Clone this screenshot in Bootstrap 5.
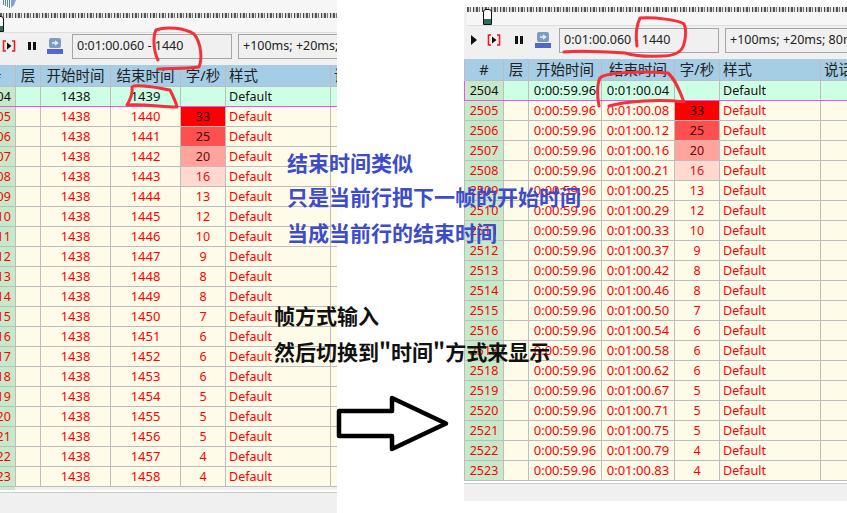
<!DOCTYPE html>
<html lang="zh">
<head>
<meta charset="utf-8">
<title>字幕</title>
<link href="https://cdn.jsdelivr.net/npm/bootstrap@5.3.0/dist/css/bootstrap.min.css" rel="stylesheet">
<style>
html,body{margin:0;background:#fff;overflow:hidden}
.stage{position:relative;width:847px;height:513px;overflow:hidden;font-family:"Noto Sans","Noto Sans CJK SC",sans-serif}
.win{position:absolute;background:#f0f0f0;overflow:hidden}
.win-a{left:0;top:0;width:337px;height:513px}
.win-b{left:464px;top:7px;width:383px;height:494px}
.wave-top{height:13px;background:#f6f6f6;padding-left:3px}
.win-b .wave-top{display:none}
.wave{height:5px;background:#f6f6f6 repeating-linear-gradient(90deg,#555 0 2px,#ddd 2px 3px,#777 3px 4px,#eee 4px 6px,#444 6px 7px,#ccc 7px 9px)}
.win-b .wave{margin-left:3px}
.track{height:15px;position:relative;border-bottom:1px solid #ddd;background:#f6f6f6}
.win-b .track{height:14px;margin-left:3px}
.thumb{position:absolute;top:-2px;left:-5px;width:9px;height:16px;background:#fff;border:1px solid #111;border-radius:3px 3px 0 0}
.thumb::after{content:"";position:absolute;left:0;right:0;bottom:0;height:5px;background:#2e6b60}
.win-b .thumb{left:16px;top:-3px}
.tools{height:32px;padding-top:1px}
.win-b .tools{height:33px;padding-top:2px}
.ico{flex:none;display:block}
.box{flex:none;height:25px;border:1px solid #a5a5a5;background:#f0f0f0;font-size:12.500px;line-height:21px;padding-left:4px;color:#222;white-space:nowrap;overflow:hidden}
.box-t{width:160px;margin-left:7px}
.box-d{width:200px;margin-left:6px}
.lead-a{flex:none;width:65px;height:24px;padding-left:2px}
.lead-b{flex:none;width:88px;height:24px;padding-left:6px}
.gap9{margin-left:9px}
.gap10{margin-left:10px}
.gap12{margin-left:12px}
.subs{table-layout:fixed;border-collapse:collapse;font-size:12.500px;margin:0;background:#fffbe9}
.win-a .subs{width:413px;margin-left:-23px}
.win-b .subs{width:416px}
.subs>thead>tr>th,.subs>tbody>tr>td{padding:0 0 0 3px;height:20px;line-height:19px;border:1px solid #bdbdbd;box-shadow:none;white-space:nowrap;overflow:hidden}
.subs>thead>tr>th{height:21px;line-height:17px;padding-bottom:2px;background:#a5cde6;color:#222;font-weight:400;font-size:14.500px;text-align:left;border-top:0}
.subs>tbody>tr>td{background:#fffbe9;color:#f00}
.subs>tbody>tr>td.num{background:#c5e9c9;text-align:center;padding:0}
.subs>tbody>tr>td.ctr{text-align:center;padding:0;font-size:13px;color:#f00}
.subs>tbody>tr>td.cps{text-align:center;padding:0;color:#f00}
.subs>tbody>tr>td.c33{background:#f00;color:#200}
.subs>tbody>tr>td.c25{background:#ff5050;color:#400}
.subs>tbody>tr>td.c20{background:#ffa39c;color:#700}
.subs>tbody>tr>td.c16{background:#ffd9d0;color:#e01010}
.subs>thead>tr>th.hc{text-align:center;padding:0 0 2px}
.subs>tbody>tr.cur>td{background:#ccffe5;color:#111;border-top:1px solid #f050f0;border-bottom:1px solid #f050f0}
.subs>tbody>tr.cur>td.num{background:#c5e9c9;color:#111;border-left:1px solid #f050f0}
.w0{width:38px}
.win-b .w0{width:39px}
.w1{width:25px}
.wa2{width:70px}
.wb2{width:73px}
.w4{width:45px}
.wa5{width:105px}
.wb5{width:101px}
.wr{width:60px}
.stub{height:3px;width:39px;background:#c5e9c9}
.win-a .stub{width:15px}
.pad{height:3px;background:#fff;border-bottom:1px solid #ccc}
.win-b .pad{margin-top:-3px}
.over{position:absolute;left:0;top:0;pointer-events:none}
.note{position:absolute;font-size:21px;font-weight:700;line-height:26px;white-space:nowrap;font-family:"Noto Sans CJK SC",sans-serif}
.note-b{color:#3d4ccb}
.note-k{color:#111}
.n1{left:287px;top:149px}
.n2{left:287px;top:183px}
.n3{left:287px;top:219px}
.n4{left:274px;top:302px}
.n5{left:274px;top:338px}
</style>
</head>
<body>
<div class="stage">

<div class="win win-a d-flex flex-column">
  <div class="wave-top"><svg class="ico" width="14" height="9" viewBox="0 0 14 9"><path d="M0 0h1v5H0zM2 0h1v6H2zM4 0h1v7H4zM6 0h1v8H6z" fill="#5a7fc0"/><path d="M8 0l5 0-2 5-3 3z" fill="#7fa3d8"/></svg></div>
  <div class="wave"></div>
  <div class="track"><div class="thumb"></div></div>
  <div class="tools d-flex align-items-start">
    <div class="lead-a d-flex align-items-center">
      <svg class="ico" width="14" height="12" viewBox="0 0 14 12"><path d="M4 1H1.500v10H4M10 1h2.500v10H10" fill="none" stroke="#e02020" stroke-width="1.600"/><path d="M5 2.500v7l4.500-3.500z" fill="#111"/></svg>
      <svg class="ico gap10" width="12" height="10" viewBox="0 0 12 10"><path d="M2 1h3v8H2zM7 1h3v8H7z" fill="#111"/></svg>
      <svg class="ico gap9" width="16" height="17" viewBox="0 0 16 17"><rect x="2" y="0" width="12" height="10" rx="2" fill="#7c9cc4"/><path d="M5 5h5M8 3l2.500 2L8 7" stroke="#e8f4ff" fill="none" stroke-width="1.300"/><path d="M0 11h16v5H0z" fill="#2b45c4" opacity=".8"/></svg>
    </div>
    <div class="box box-t">0:01:00.060 - 1440</div>
    <div class="box box-d">+100ms; +20ms; 80ms</div>
  </div>
  <table class="table subs">
    <colgroup><col class="w0"><col class="w1"><col class="wa2"><col class="wa2"><col class="w4"><col class="wa5"><col class="wr"></colgroup>
    <thead><tr><th class="hc">#</th><th class="hc">层</th><th class="hc">开始时间</th><th class="hc">结束时间</th><th class="hc">字/秒</th><th>样式</th><th>说话人</th></tr></thead>
    <tbody>
      <tr class="cur"><td class="num">2504</td><td></td><td class="ctr">1438</td><td class="ctr">1439</td><td class="cps"></td><td>Default</td><td></td></tr>
      <tr><td class="num">2505</td><td></td><td class="ctr">1438</td><td class="ctr">1440</td><td class="cps c33">33</td><td>Default</td><td></td></tr>
      <tr><td class="num">2506</td><td></td><td class="ctr">1438</td><td class="ctr">1441</td><td class="cps c25">25</td><td>Default</td><td></td></tr>
      <tr><td class="num">2507</td><td></td><td class="ctr">1438</td><td class="ctr">1442</td><td class="cps c20">20</td><td>Default</td><td></td></tr>
      <tr><td class="num">2508</td><td></td><td class="ctr">1438</td><td class="ctr">1443</td><td class="cps c16">16</td><td>Default</td><td></td></tr>
      <tr><td class="num">2509</td><td></td><td class="ctr">1438</td><td class="ctr">1444</td><td class="cps">13</td><td>Default</td><td></td></tr>
      <tr><td class="num">2510</td><td></td><td class="ctr">1438</td><td class="ctr">1445</td><td class="cps">12</td><td>Default</td><td></td></tr>
      <tr><td class="num">2511</td><td></td><td class="ctr">1438</td><td class="ctr">1446</td><td class="cps">10</td><td>Default</td><td></td></tr>
      <tr><td class="num">2512</td><td></td><td class="ctr">1438</td><td class="ctr">1447</td><td class="cps">9</td><td>Default</td><td></td></tr>
      <tr><td class="num">2513</td><td></td><td class="ctr">1438</td><td class="ctr">1448</td><td class="cps">8</td><td>Default</td><td></td></tr>
      <tr><td class="num">2514</td><td></td><td class="ctr">1438</td><td class="ctr">1449</td><td class="cps">8</td><td>Default</td><td></td></tr>
      <tr><td class="num">2515</td><td></td><td class="ctr">1438</td><td class="ctr">1450</td><td class="cps">7</td><td>Default</td><td></td></tr>
      <tr><td class="num">2516</td><td></td><td class="ctr">1438</td><td class="ctr">1451</td><td class="cps">6</td><td>Default</td><td></td></tr>
      <tr><td class="num">2517</td><td></td><td class="ctr">1438</td><td class="ctr">1452</td><td class="cps">6</td><td>Default</td><td></td></tr>
      <tr><td class="num">2518</td><td></td><td class="ctr">1438</td><td class="ctr">1453</td><td class="cps">6</td><td>Default</td><td></td></tr>
      <tr><td class="num">2519</td><td></td><td class="ctr">1438</td><td class="ctr">1454</td><td class="cps">5</td><td>Default</td><td></td></tr>
      <tr><td class="num">2520</td><td></td><td class="ctr">1438</td><td class="ctr">1455</td><td class="cps">5</td><td>Default</td><td></td></tr>
      <tr><td class="num">2521</td><td></td><td class="ctr">1438</td><td class="ctr">1456</td><td class="cps">5</td><td>Default</td><td></td></tr>
      <tr><td class="num">2522</td><td></td><td class="ctr">1438</td><td class="ctr">1457</td><td class="cps">4</td><td>Default</td><td></td></tr>
      <tr><td class="num">2523</td><td></td><td class="ctr">1438</td><td class="ctr">1458</td><td class="cps">4</td><td>Default</td><td></td></tr>
    </tbody>
  </table>
  <div class="stub"></div>
  <div class="pad"></div>
</div>

<div class="win win-b d-flex flex-column">
  <div class="wave"></div>
  <div class="track"><div class="thumb"></div></div>
  <div class="tools d-flex align-items-start">
    <div class="lead-b d-flex align-items-center">
      <svg class="ico" width="8" height="10" viewBox="0 0 8 10"><path d="M1 0v10l6-5z" fill="#111"/></svg>
      <svg class="ico gap9" width="14" height="12" viewBox="0 0 14 12"><path d="M4 1H1.500v10H4M10 1h2.500v10H10" fill="none" stroke="#e02020" stroke-width="1.600"/><path d="M5 2.500v7l4.500-3.500z" fill="#111"/></svg>
      <svg class="ico gap12" width="12" height="10" viewBox="0 0 12 10"><path d="M2 1h3v8H2zM7 1h3v8H7z" fill="#111"/></svg>
      <svg class="ico gap10" width="16" height="17" viewBox="0 0 16 17"><rect x="2" y="0" width="12" height="10" rx="2" fill="#7c9cc4"/><path d="M5 5h5M8 3l2.500 2L8 7" stroke="#e8f4ff" fill="none" stroke-width="1.300"/><path d="M0 11h16v5H0z" fill="#2b45c4" opacity=".8"/></svg>
    </div>
    <div class="box box-t">0:01:00.060 - 1440</div>
    <div class="box box-d">+100ms; +20ms; 80ms</div>
  </div>
  <table class="table subs">
    <colgroup><col class="w0"><col class="w1"><col class="wb2"><col class="wb2"><col class="w4"><col class="wb5"><col class="wr"></colgroup>
    <thead><tr><th class="hc">#</th><th class="hc">层</th><th class="hc">开始时间</th><th class="hc">结束时间</th><th class="hc">字/秒</th><th>样式</th><th>说话人</th></tr></thead>
    <tbody>
      <tr class="cur"><td class="num">2504</td><td></td><td class="ctr">0:00:59.96</td><td class="ctr">0:01:00.04</td><td class="cps"></td><td>Default</td><td></td></tr>
      <tr><td class="num">2505</td><td></td><td class="ctr">0:00:59.96</td><td class="ctr">0:01:00.08</td><td class="cps c33">33</td><td>Default</td><td></td></tr>
      <tr><td class="num">2506</td><td></td><td class="ctr">0:00:59.96</td><td class="ctr">0:01:00.12</td><td class="cps c25">25</td><td>Default</td><td></td></tr>
      <tr><td class="num">2507</td><td></td><td class="ctr">0:00:59.96</td><td class="ctr">0:01:00.16</td><td class="cps c20">20</td><td>Default</td><td></td></tr>
      <tr><td class="num">2508</td><td></td><td class="ctr">0:00:59.96</td><td class="ctr">0:01:00.21</td><td class="cps c16">16</td><td>Default</td><td></td></tr>
      <tr><td class="num">2509</td><td></td><td class="ctr">0:00:59.96</td><td class="ctr">0:01:00.25</td><td class="cps">13</td><td>Default</td><td></td></tr>
      <tr><td class="num">2510</td><td></td><td class="ctr">0:00:59.96</td><td class="ctr">0:01:00.29</td><td class="cps">12</td><td>Default</td><td></td></tr>
      <tr><td class="num">2511</td><td></td><td class="ctr">0:00:59.96</td><td class="ctr">0:01:00.33</td><td class="cps">10</td><td>Default</td><td></td></tr>
      <tr><td class="num">2512</td><td></td><td class="ctr">0:00:59.96</td><td class="ctr">0:01:00.37</td><td class="cps">9</td><td>Default</td><td></td></tr>
      <tr><td class="num">2513</td><td></td><td class="ctr">0:00:59.96</td><td class="ctr">0:01:00.42</td><td class="cps">8</td><td>Default</td><td></td></tr>
      <tr><td class="num">2514</td><td></td><td class="ctr">0:00:59.96</td><td class="ctr">0:01:00.46</td><td class="cps">8</td><td>Default</td><td></td></tr>
      <tr><td class="num">2515</td><td></td><td class="ctr">0:00:59.96</td><td class="ctr">0:01:00.50</td><td class="cps">7</td><td>Default</td><td></td></tr>
      <tr><td class="num">2516</td><td></td><td class="ctr">0:00:59.96</td><td class="ctr">0:01:00.54</td><td class="cps">6</td><td>Default</td><td></td></tr>
      <tr><td class="num">2517</td><td></td><td class="ctr">0:00:59.96</td><td class="ctr">0:01:00.58</td><td class="cps">6</td><td>Default</td><td></td></tr>
      <tr><td class="num">2518</td><td></td><td class="ctr">0:00:59.96</td><td class="ctr">0:01:00.62</td><td class="cps">6</td><td>Default</td><td></td></tr>
      <tr><td class="num">2519</td><td></td><td class="ctr">0:00:59.96</td><td class="ctr">0:01:00.67</td><td class="cps">5</td><td>Default</td><td></td></tr>
      <tr><td class="num">2520</td><td></td><td class="ctr">0:00:59.96</td><td class="ctr">0:01:00.71</td><td class="cps">5</td><td>Default</td><td></td></tr>
      <tr><td class="num">2521</td><td></td><td class="ctr">0:00:59.96</td><td class="ctr">0:01:00.75</td><td class="cps">5</td><td>Default</td><td></td></tr>
      <tr><td class="num">2522</td><td></td><td class="ctr">0:00:59.96</td><td class="ctr">0:01:00.79</td><td class="cps">4</td><td>Default</td><td></td></tr>
      <tr><td class="num">2523</td><td></td><td class="ctr">0:00:59.96</td><td class="ctr">0:01:00.83</td><td class="cps">4</td><td>Default</td><td></td></tr>
    </tbody>
  </table>
  <div class="stub"></div>
  <div class="pad"></div>
</div>

<svg class="over" width="847" height="513" viewBox="0 0 847 513" fill="none">
  <g stroke="#f5303a" stroke-width="3" stroke-linecap="round" stroke-linejoin="round">
    <path d="M158 60C153 50 153 36 156 30C166 26 185 28 194 34C202 44 202 60 199 67C185 69 170 68 158 69"/>
    <path d="M134 86C146 85 158 88 170 90C173 96 176 102 177 107C162 107 146 104 127 105C130 100 133 94 132 87"/>
    <path d="M564 52C580 50 610 52 625 53C635 56 645 57 662 56C674 56 682 52 684 44C686 36 686 28 684 24C678 20 655 17 640 18C637 24 635 32 637 46"/>
    <path d="M599 106C597 96 597 84 600 78C606 72 640 71 668 73C676 80 680 92 684 102C660 99 628 101 609 106"/>
  </g>
  <path d="M339 411H392V398L446 423.500L392 449V436H339Z" fill="#fff" stroke="#000" stroke-width="4.500" stroke-linejoin="round"/>
</svg>

<div class="note note-b n1">结束时间类似</div>
<div class="note note-b n2">只是当前行把下一帧的开始时间</div>
<div class="note note-b n3">当成当前行的结束时间</div>
<div class="note note-k n4">帧方式输入</div>
<div class="note note-k n5">然后切换到"时间"方式来显示</div>

</div>
</body>
</html>
